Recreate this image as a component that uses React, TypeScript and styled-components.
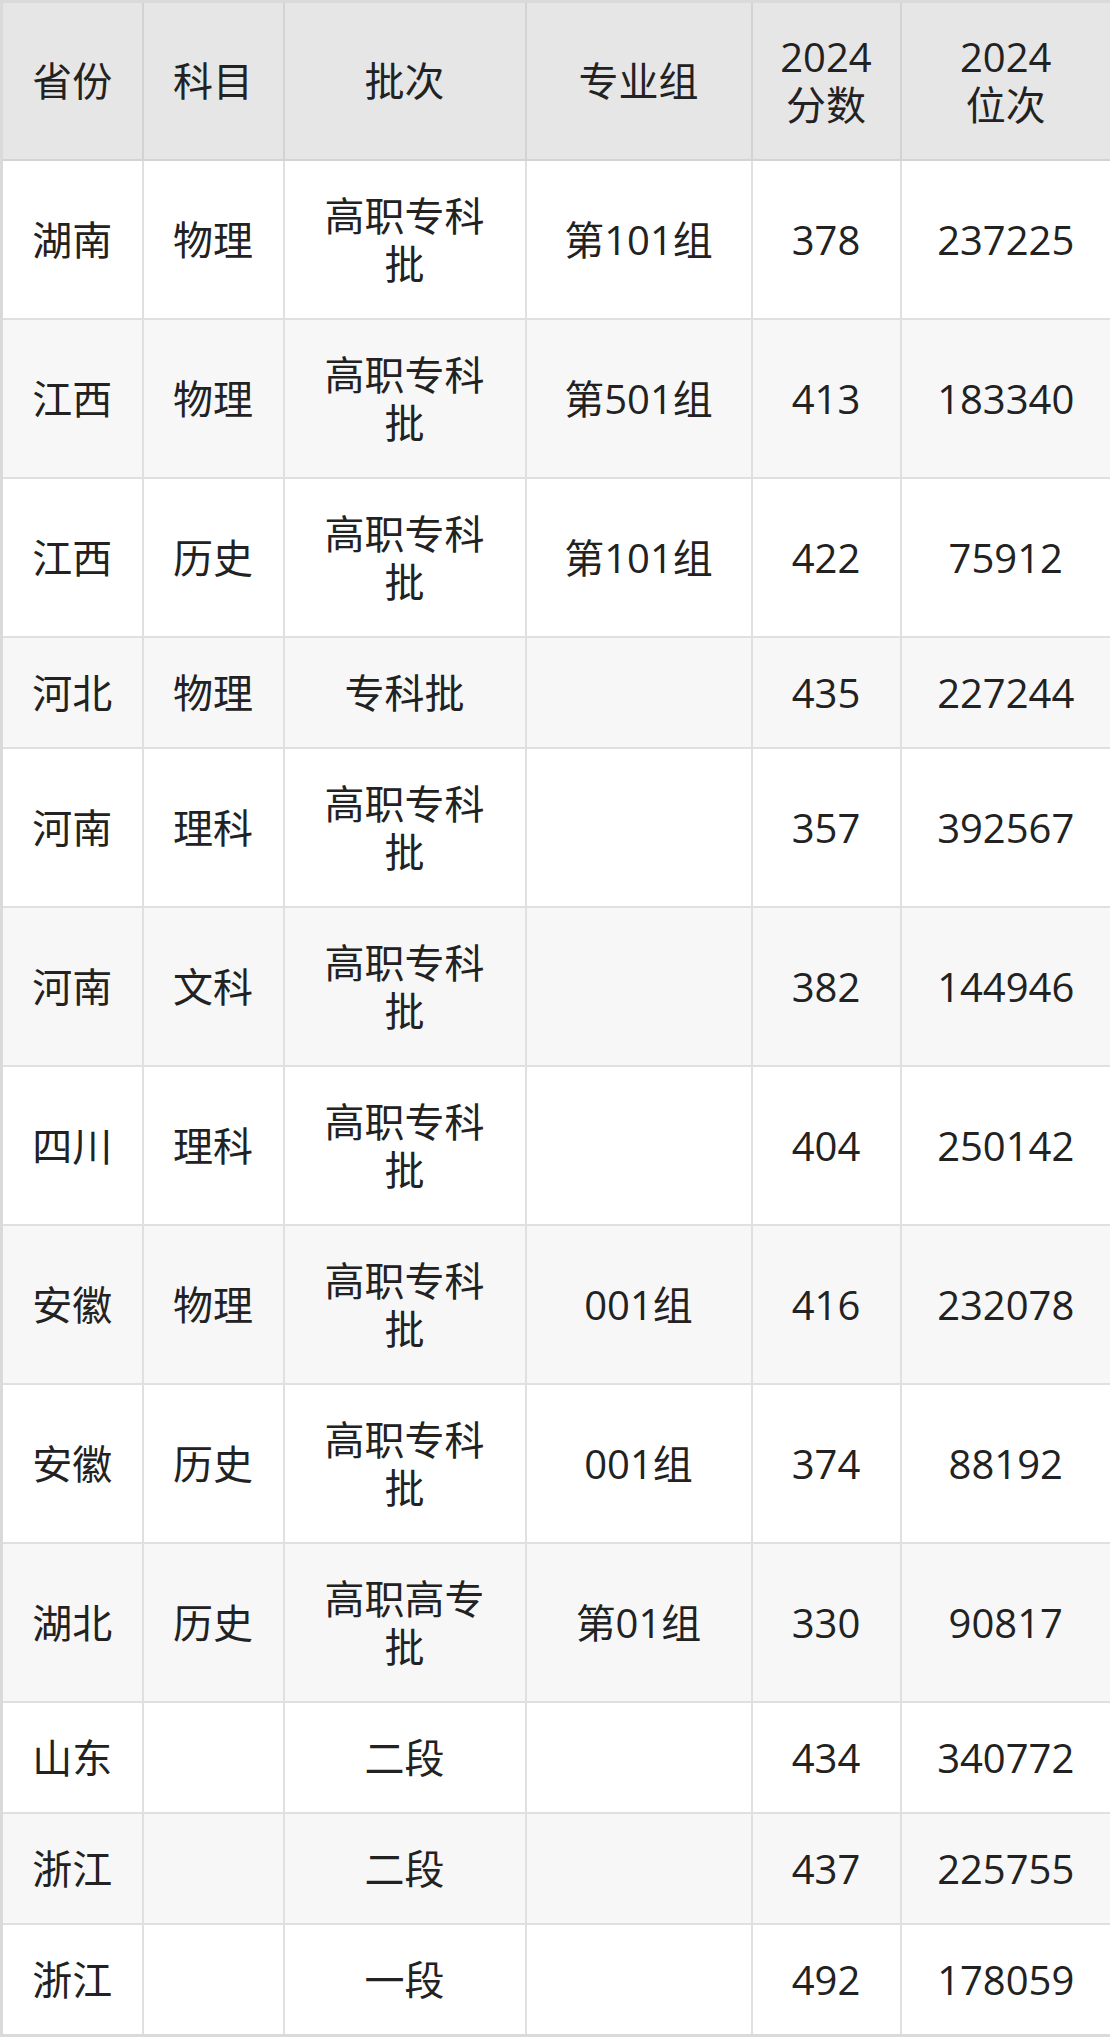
import React from "react";
import styled, { createGlobalStyle } from "styled-components";

type Row = {
  province: string;
  subject: string;
  batch: string;
  group: string;
  score: string;
  rank: string;
};

const rows: Row[] = [
  { province: "湖南", subject: "物理", batch: "高职专科批", group: "第101组", score: "378", rank: "237225" },
  { province: "江西", subject: "物理", batch: "高职专科批", group: "第501组", score: "413", rank: "183340" },
  { province: "江西", subject: "历史", batch: "高职专科批", group: "第101组", score: "422", rank: "75912" },
  { province: "河北", subject: "物理", batch: "专科批", group: "", score: "435", rank: "227244" },
  { province: "河南", subject: "理科", batch: "高职专科批", group: "", score: "357", rank: "392567" },
  { province: "河南", subject: "文科", batch: "高职专科批", group: "", score: "382", rank: "144946" },
  { province: "四川", subject: "理科", batch: "高职专科批", group: "", score: "404", rank: "250142" },
  { province: "安徽", subject: "物理", batch: "高职专科批", group: "001组", score: "416", rank: "232078" },
  { province: "安徽", subject: "历史", batch: "高职专科批", group: "001组", score: "374", rank: "88192" },
  { province: "湖北", subject: "历史", batch: "高职高专批", group: "第01组", score: "330", rank: "90817" },
  { province: "山东", subject: "", batch: "二段", group: "", score: "434", rank: "340772" },
  { province: "浙江", subject: "", batch: "二段", group: "", score: "437", rank: "225755" },
  { province: "浙江", subject: "", batch: "一段", group: "", score: "492", rank: "178059" },
];

const widths = [141, 141, 242, 226, 149, 211];

function App() {
  return (
    <>
      <GlobalStyle />
      <Table>
        <colgroup>
          {widths.map((w, i) => (
            <col key={i} style={{ width: w }} />
          ))}
        </colgroup>
        <thead>
          <tr>
            <Th>省份</Th>
            <Th>科目</Th>
            <Th>批次</Th>
            <Th>专业组</Th>
            <Th>
              2024
              <br />
              分数
            </Th>
            <Th>
              2024
              <br />
              位次
            </Th>
          </tr>
        </thead>
        <tbody>
          {rows.map((r, i) => (
            <BodyRow key={i} $striped={i % 2 === 1}>
              <Td>{r.province}</Td>
              <Td>{r.subject}</Td>
              <Td>{r.batch}</Td>
              <Td>{r.group}</Td>
              <Td>{r.score}</Td>
              <Td>{r.rank}</Td>
            </BodyRow>
          ))}
        </tbody>
      </Table>
    </>
  );
}

export default App;

const GlobalStyle = createGlobalStyle`
  html, body {
    margin: 0;
    padding: 0;
    background: #ffffff;
  }
  body {
    font-family: "Open Sans", "Noto Sans CJK SC", sans-serif;
    color: #222222;
  }
`;

const Table = styled.table`
  width: 1110px;
  table-layout: fixed;
  border-collapse: collapse;
  border: 3px solid #dadada;
  font-size: 40px;
  line-height: 48px;
`;

const Th = styled.th`
  background: #e6e6e6;
  border: 2px solid #d3d3d3;
  font-weight: 400;
  color: #222222;
  padding: 30px 24px;
  text-align: center;
  vertical-align: middle;
`;

const BodyRow = styled.tr<{ $striped: boolean }>`
  background: ${(p) => (p.$striped ? "#f7f7f7" : "#ffffff")};
`;

const Td = styled.td`
  border: 2px solid #e0e0e0;
  padding: 30.5px 24px;
  text-align: center;
  vertical-align: middle;
`;
